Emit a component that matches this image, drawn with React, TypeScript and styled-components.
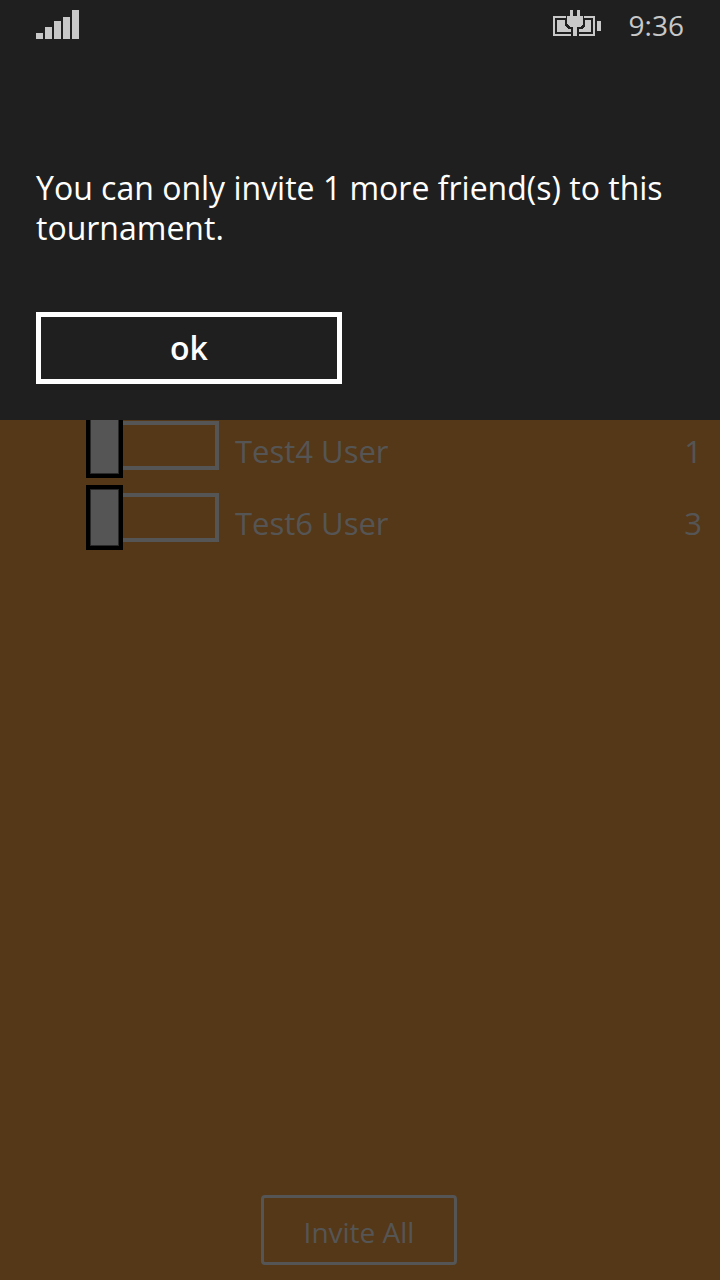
import React from "react";
import styled, { createGlobalStyle } from "styled-components";

const GlobalStyle = createGlobalStyle`
  *, *::before, *::after { box-sizing: border-box; }
  body {
    margin: 0;
    background: #553817;
    font-family: "Segoe UI", "Open Sans", "Noto Sans", sans-serif;
  }
`;

const Screen = styled.div`
  position: relative;
  display: flex;
  flex-direction: column;
  min-height: 100vh;
  background: #553817;
  color: #555555;
`;

const Dialog = styled.section`
  position: absolute;
  top: 0;
  left: 0;
  right: 0;
  z-index: 1;
  padding: 0 36px 36px;
  background: #1f1f1f;
  color: #ffffff;
`;

const StatusBar = styled.div`
  display: flex;
  align-items: center;
  justify-content: space-between;
  height: 50px;
  color: #c8c8c8;
`;

const StatusGroup = styled.div`
  display: flex;
  align-items: center;
  gap: 28px;
`;

const Icon = styled.svg`
  display: block;
  fill: currentColor;
`;

const Clock = styled.time`
  font-size: 28px;
  line-height: 50px;
`;

const Message = styled.p`
  margin: 0;
  padding: 118px 0 64px;
  font-size: 32px;
  line-height: 40px;
`;

const OkButton = styled.button`
  display: block;
  width: 306px;
  max-width: 100%;
  height: 72px;
  padding: 0;
  border: 5px solid #ffffff;
  background: transparent;
  color: #ffffff;
  font: 600 32px/40px "Segoe UI", "Open Sans", "Noto Sans", sans-serif;
`;

const FriendList = styled.ul`
  flex: 1;
  margin: 0;
  padding: 409px 18px 0 86px;
  list-style: none;
`;

const FriendRow = styled.li`
  display: flex;
  align-items: center;
  height: 72px;
  font-size: 31px;
  line-height: 40px;
`;

const FriendLabel = styled.label`
  display: flex;
  flex: 1;
  align-items: center;
  gap: 16px;
`;

const RowText = styled.span`
  padding-top: 12px;
`;

const Switch = styled.input`
  display: flex;
  align-items: center;
  width: 133px;
  height: 65px;
  margin: 0;
  appearance: none;

  &::before {
    content: "";
    width: 37px;
    height: 65px;
    border: 4px solid #000000;
    background: #555555;
    box-shadow: inset 0 0 0 1px #2a2a2a;
  }

  &::after {
    content: "";
    flex: 1;
    height: 49px;
    border: 4px solid #555555;
    border-left: 0;
  }
`;

const Footer = styled.footer`
  display: flex;
  justify-content: center;
  padding: 0 2px 15px 0;
`;

const InviteButton = styled.button`
  width: 196px;
  height: 70px;
  padding: 4px 0 0;
  border: 3px solid #555555;
  border-radius: 4px;
  background: transparent;
  color: #555555;
  font: 400 28px/40px "Segoe UI", "Open Sans", "Noto Sans", sans-serif;
`;

const SignalIcon = () => (
  <Icon width="43" height="30" viewBox="0 0 43 30" aria-hidden="true">
    <path d="M0 23h7v6H0zM9 17h7v12H9zM18 11h7v18h-7zM27 7h7v22h-7zM36 0h7v29h-7z" />
  </Icon>
);

const BatteryIcon = () => (
  <Icon width="48" height="30" viewBox="0 0 48 30" shapeRendering="crispEdges" aria-hidden="true">
    <path d="M0 6h13v2H2v16h16v2H0z" />
    <path d="M31 6h11v20H26v-2h14V8h-9z" />
    <path d="M44 11h4v10h-4z" />
    <path d="M4 10h8v6l3 3h3v3H4z" />
    <path d="M32 10h6v12H26v-3h3l3-3z" />
    <path d="M17 0h3v6h4V0h3v6h3v8l-3 3h-3v9h-4v-9h-3l-3-3V6h3z" />
  </Icon>
);

const friends = [
  { id: "test4", name: "Test4 User", count: 1 },
  { id: "test6", name: "Test6 User", count: 3 },
];

export default function App() {
  return (
    <>
      <GlobalStyle />
      <Screen>
        <Dialog role="alertdialog" aria-describedby="invite-limit">
          <StatusBar>
            <SignalIcon />
            <StatusGroup>
              <BatteryIcon />
              <Clock>9:36</Clock>
            </StatusGroup>
          </StatusBar>
          <Message id="invite-limit">
            You can only invite 1 more friend(s) to this tournament.
          </Message>
          <OkButton type="button">ok</OkButton>
        </Dialog>
        <FriendList>
          {friends.map((friend) => (
            <FriendRow key={friend.id}>
              <FriendLabel htmlFor={friend.id}>
                <Switch type="checkbox" id={friend.id} />
                <RowText>{friend.name}</RowText>
              </FriendLabel>
              <RowText>{friend.count}</RowText>
            </FriendRow>
          ))}
        </FriendList>
        <Footer>
          <InviteButton type="button">Invite All</InviteButton>
        </Footer>
      </Screen>
    </>
  );
}
